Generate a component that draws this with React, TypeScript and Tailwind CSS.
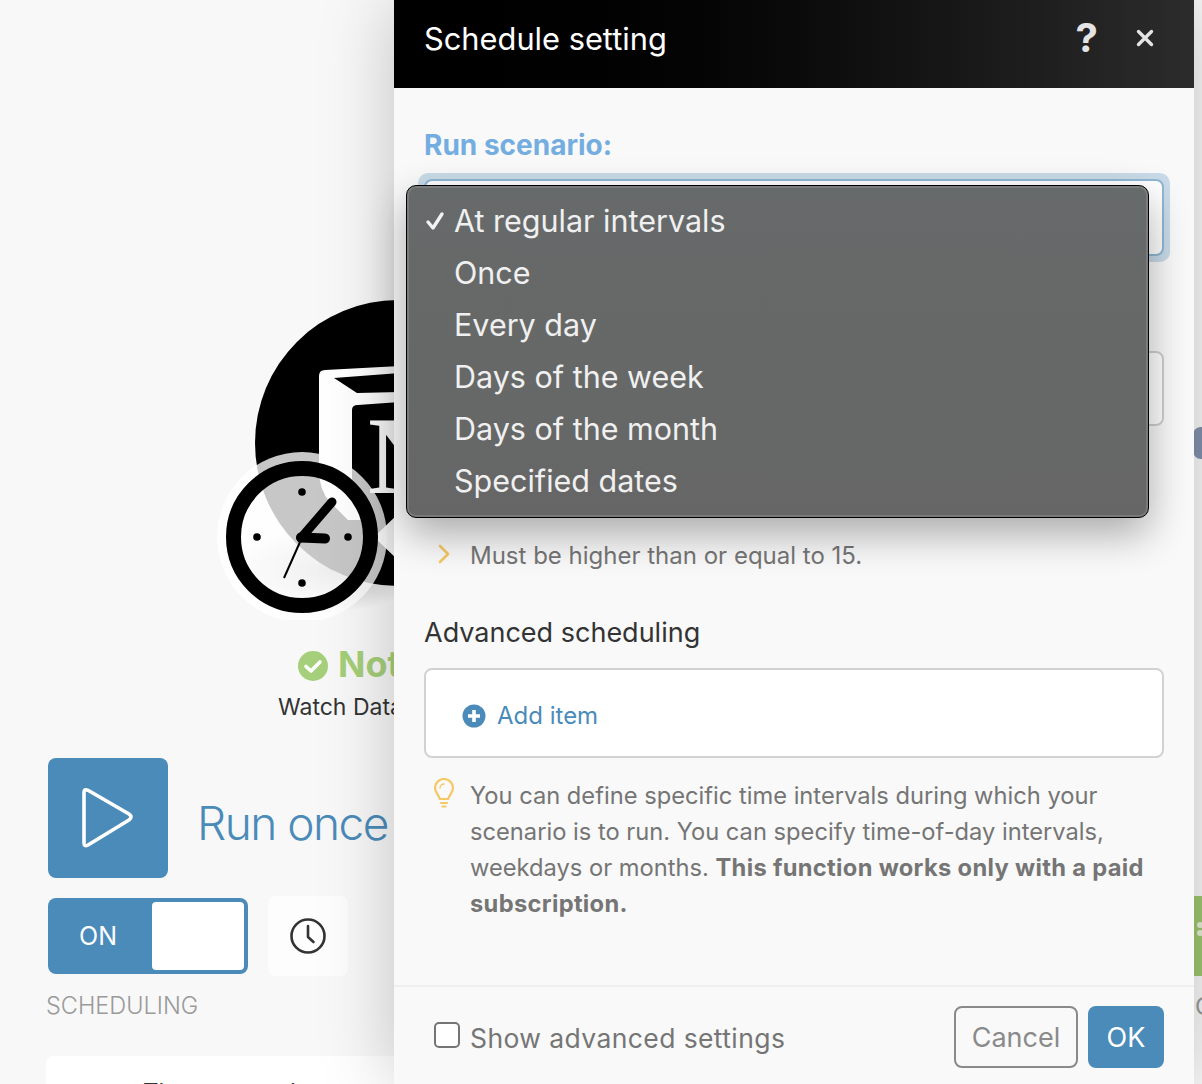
import React from "react";

const items = ["At regular intervals", "Once", "Every day", "Days of the week", "Days of the month", "Specified dates"];

function NodeArt() {
  return (
    <svg width="300" height="340" viewBox="0 0 300 340" className="absolute left-[200px] top-[280px]">
      <defs>
        <radialGradient id="sh" cx="50%" cy="50%" r="50%">
          <stop offset="0%" stopColor="#000" stopOpacity="0.28" />
          <stop offset="100%" stopColor="#000" stopOpacity="0" />
        </radialGradient>
      </defs>
      <ellipse cx="130" cy="290" rx="95" ry="42" fill="url(#sh)" />
      <circle cx="198" cy="163" r="143" fill="#000" />
      <path d="M125 90 Q119 90 119 96 L119 190 Q119 210 130 222 L148 240 L200 240 L200 86 Z" fill="#fff" />
      <path d="M134 98 L200 93 L200 112 L157 113 Z" fill="#000" />
      <path d="M152 130 Q152 125 158 125 L200 122 L200 240 L176 240 L152 212 Z" fill="#000" />
      <text x="168" y="213" fontFamily="'Liberation Serif', serif" fontWeight="700" fontSize="110" fill="#fff">N</text>
      <path d="M174 257 L200 232 L200 282 Z" fill="#f9f9f9" />
      <circle cx="102" cy="257" r="85" fill="#fff" fillOpacity="0.78" />
      <circle cx="102" cy="257" r="68.5" fill="none" stroke="#000" strokeWidth="15" />
      <circle cx="102" cy="212" r="3.8" fill="#000" />
      <circle cx="102" cy="303" r="3.8" fill="#000" />
      <circle cx="57" cy="257" r="3.8" fill="#000" />
      <circle cx="148" cy="257" r="3.8" fill="#000" />
      <path d="M101 258 L132 222" stroke="#000" strokeWidth="9" strokeLinecap="round" />
      <path d="M101 257.5 L125 258.5" stroke="#000" strokeWidth="10" strokeLinecap="round" />
      <path d="M100 262 L84 298" stroke="#000" strokeWidth="2" />
    </svg>
  );
}

export default function App() {
  return (
    <div className="relative h-[1084px] w-[1202px] overflow-hidden bg-[#f8f8f8] font-['Inter',sans-serif]">
      <div className="relative h-[758px]">
        <NodeArt />
        <div className="absolute left-[298px] top-[644px] flex items-center gap-[10px] whitespace-nowrap">
          <svg width="30" height="30" viewBox="0 0 30 30" className="mt-[4px]">
            <circle cx="15" cy="15" r="15" fill="#a5cf7a" />
            <path d="M8 15.5 L13 20 L22 11" fill="none" stroke="#fff" strokeWidth="3.6" strokeLinecap="round" strokeLinejoin="round" />
          </svg>
          <span className="text-[36px] font-bold leading-[40px] text-[#a5cf7a]">Notion</span>
        </div>
        <div className="absolute left-[278px] top-[692px] whitespace-nowrap text-[23px] leading-[30px] text-[#333]">Watch Database Items</div>
      </div>

      <div className="flex items-center gap-[29px] pl-[48px]">
        <div className="flex h-[120px] w-[120px] items-center justify-center rounded-lg bg-[#4b8bb9]">
          <svg width="54" height="62" viewBox="0 0 54 62" className="-translate-x-[1px]">
            <path d="M4 5.5 Q4 1.5 8 3.3 L49 27 Q53 30 49 33 L8 58 Q4 60 4 56 Z" fill="none" stroke="#fff" strokeWidth="3.6" strokeLinejoin="round" />
          </svg>
        </div>
        <span className="mt-[10px] whitespace-nowrap text-[46px] font-light leading-[56px] tracking-[-1.5px] text-[#4b8bb9]">Run once</span>
      </div>

      <div className="mt-[18px] flex items-center gap-[20px] pl-[48px]">
        <div className="flex h-[76px] w-[200px] items-center justify-end rounded-lg bg-[#4b8bb9] pr-[4px]">
          <span className="mr-[35px] text-[25px] leading-[30px] text-white">ON</span>
          <div className="h-[68px] w-[92px] rounded bg-white" />
        </div>
        <div className="flex h-[80px] w-[80px] items-center justify-center rounded-lg bg-[#fdfdfd]">
          <svg width="36" height="36" viewBox="0 0 36 36" fill="none" stroke="#333" strokeWidth="2.6" strokeLinecap="round" strokeLinejoin="round">
            <circle cx="18" cy="18" r="16.5" />
            <path d="M18 8 L18 19 L23.5 24" />
          </svg>
        </div>
      </div>

      <div className="ml-[46px] mt-[15px] text-[23.5px] font-light leading-[30px] text-[#9a9a9a]">SCHEDULING</div>

      <div className="ml-[46px] mt-[35px] h-[200px] w-[360px] rounded-t-lg bg-white pl-[97px] pt-[22px] text-[24px] leading-[30px] text-[#333]">The current time</div>

      <div className="absolute left-[1193px] top-[427px] h-[32px] w-[16px] rounded-full bg-[#8391ad]" />
      <div className="absolute left-[1194px] top-[896px] flex h-[80px] w-[8px] flex-col items-start gap-[2px] bg-[#9fc56f] pt-[26px]">
        <div className="h-[6px] w-[6px] translate-x-[3px] rounded-full bg-[#e4efd6]" />
        <div className="h-[6px] w-[6px] translate-x-[3px] rounded-full bg-[#e4efd6]" />
      </div>
      <div className="absolute left-[1195px] top-[992px] text-[24px] leading-[30px] text-[#999]">C</div>

      <div className="absolute left-[394px] top-0 flex h-[1084px] w-[800px] flex-col bg-[#f9f9f9] shadow-[0_0_70px_rgba(0,0,0,0.22)]">
        <div className="flex h-[88px] shrink-0 items-center justify-between bg-gradient-to-r from-black to-[#2c2c2c] pl-[30px] pr-[40px]">
          <span className="mb-[10px] text-[30.8px] leading-[40px] text-white">Schedule setting</span>
          <div className="mb-[12px] flex items-center gap-[38px]">
            <span className="text-[40px] font-bold leading-[40px] text-[#e4e4e4]">?</span>
            <svg width="18" height="18" viewBox="0 0 18 18" stroke="#e4e4e4" strokeWidth="3.4" strokeLinecap="round">
              <path d="M2.5 2.5 L15.5 15.5 M15.5 2.5 L2.5 15.5" />
            </svg>
          </div>
        </div>

        <div className="flex flex-1 flex-col px-[30px]">
          <div className="mt-[39px] text-[28px] font-bold leading-[36px] text-[#74ade0]">Run scenario:</div>
          <div className="-ml-[6px] mt-[10px] h-[89px] w-[752px] rounded-[10px] bg-[#c9dbe8] p-[6px]">
            <div className="h-full w-full rounded-lg border-2 border-[#8fb7d4] bg-white" />
          </div>
          <div className="mt-[89px] h-[75px] w-[740px] rounded-lg border-2 border-[#cfcfcf] bg-white" />

          <div className="ml-[14px] mt-[112px] flex items-center gap-[20px]">
            <svg width="12" height="20" viewBox="0 0 12 20" fill="none" stroke="#f5c765" strokeWidth="2.6" strokeLinecap="round" strokeLinejoin="round" className="mb-[4px]">
              <path d="M2 2 L10 10 L2 18" />
            </svg>
            <span className="text-[24px] leading-[36px] text-[#757575]">Must be higher than or equal to 15.</span>
          </div>

          <div className="mt-[41px] text-[27px] leading-[36px] text-[#333]">Advanced scheduling</div>

          <div className="mt-[17px] flex h-[90px] w-[740px] items-center gap-[11px] rounded-lg border-2 border-[#d2d2d2] bg-white pl-[36px] pt-[5px]">
            <svg width="24" height="24" viewBox="0 0 24 24">
              <circle cx="12" cy="12" r="11.5" fill="#4b8bb9" />
              <path d="M12 6 V18 M6 12 H18" stroke="#fff" strokeWidth="3.6" />
            </svg>
            <span className="text-[24px] leading-[32px] text-[#4b8bb9]">Add item</span>
          </div>

          <div className="ml-[8px] mt-[20px] flex gap-[14px]">
            <svg width="24" height="30" viewBox="0 0 24 30" fill="none" stroke="#f5c765" strokeWidth="2.2" strokeLinecap="round" strokeLinejoin="round" className="shrink-0">
              <path d="M8 21 C6 16 3 14 3 10 A9 9 0 0 1 21 10 C21 14 18 16 16 21 Z" />
              <path d="M9 25 H15 M10.5 28.5 H13.5" />
              <path d="M8 10 A4 4 0 0 1 12 6" strokeWidth="1.4" />
            </svg>
            <p className="w-[700px] text-[23.7px] leading-[36px] text-[#757575]">
              You can define specific time intervals during which your scenario is to run. You can specify time-of-day intervals, weekdays or months. <b className="font-bold tracking-[0.32px]">This function works only with a paid subscription.</b>
            </p>
          </div>
        </div>

        <div className="flex h-[99px] shrink-0 items-center justify-between border-t-2 border-[#efefef] pl-[40px] pr-[30px] pt-[3px]">
          <div className="flex items-center gap-[10px]">
            <div className="mb-[5px] h-[26px] w-[26px] rounded-[5px] border-2 border-[#757575] bg-white" />
            <span className="mt-[2px] text-[26.5px] leading-[36px] tracking-[0.4px] text-[#757575]">Show advanced settings</span>
          </div>
          <div className="flex items-center gap-[10px]">
            <div className="flex h-[62px] w-[124px] items-center justify-center rounded-lg border-2 border-[#8a8a8a] pt-[3px] text-[27px] text-[#8a8a8a]">Cancel</div>
            <div className="flex h-[62px] w-[76px] items-center justify-center rounded-lg bg-[#4b8bb9] pt-[3px] text-[27px] text-white">OK</div>
          </div>
        </div>
      </div>

      <div className="absolute left-[406px] top-[185px] h-[333px] w-[743px] rounded-[10px] border border-black bg-gradient-to-b from-[#676a6a] to-[#666666] py-[9px] shadow-[0_16px_40px_rgba(0,0,0,0.32),inset_0_0_0_2px_rgba(255,255,255,0.13)]">
        {items.map((t, i) => (
          <div key={t} className="flex h-[52px] items-center">
            <span className="flex w-[47px] shrink-0 justify-end pr-[9px]">
              {i === 0 && (
                <svg width="20" height="20" viewBox="0 0 20 20" fill="none" stroke="#f2f2f2" strokeWidth="3.4" strokeLinecap="round" strokeLinejoin="round">
                  <path d="M3 11 L8 17 L17 3" />
                </svg>
              )}
            </span>
            <span className="whitespace-nowrap text-[30.5px] leading-[40px] text-[#f0f0f0]">{t}</span>
          </div>
        ))}
      </div>
    </div>
  );
}
